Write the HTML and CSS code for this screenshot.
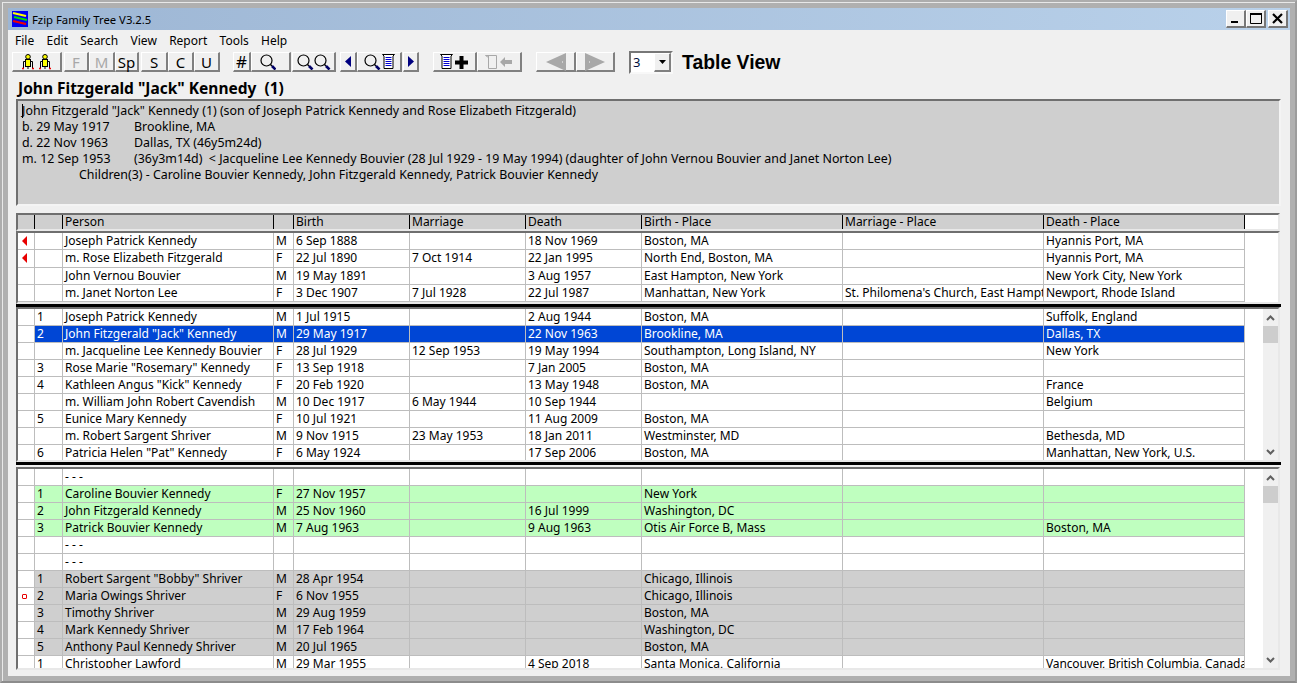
FILE: index.html
```html
<!DOCTYPE html>
<html lang="en">
<head>
    <meta charset="UTF-8">
    <title>Fzip Family Tree V3.2.5</title>
    <link rel="stylesheet" href="styles.css">
</head>
<body>
<svg class="defs" width="0" height="0">
    <defs>
        <g id="person">
            <path d="M1.500 14V7.500h9V14" fill="none" stroke="#000"/>
            <rect x="3.500" y="5.500" width="5" height="7" fill="#ff0" stroke="#000"/>
            <circle cx="6" cy="2.800" r="2.300" fill="#ff0" stroke="#000"/>
            <path d="M0 14.500h2M10 14.500h2" stroke="#e00" stroke-width="1.500"/>
            <path d="M6 12.500V15" stroke="#000"/>
        </g>
        <g id="lens">
            <circle cx="6.500" cy="6.500" r="5.500" fill="none" stroke="#000" stroke-width="1.200"/>
            <path d="M10.500 10.500l1.500 1.500" stroke="#000" stroke-width="1.400"/>
            <path d="M12 12l3.500 3.500" stroke="#006" stroke-width="2.600"/>
        </g>
        <g id="doc">
            <path d="M.5.500h12l-1.500 1.500v12.500h-9V2z" fill="#fff" stroke="#000"/>
            <path d="M3.500 3.500h6M3.500 5.500h6M3.500 7.500h6M3.500 9.500h6M3.500 11.500h6" stroke="#0000d0"/>
        </g>
    </defs>
</svg>
<div class="window">
<div class="frame">
<div class="client">

    <div class="titlebar">
        <svg class="app-icon" width="16" height="16" viewBox="0 0 16 16">
            <rect width="16" height="16" fill="#0000f0"/>
            <path d="M1 2l13 3" stroke="#ffff00" stroke-width="2"/>
            <path d="M2 6l13 3" stroke="#00e000" stroke-width="2"/>
            <path d="M1 10l13 3" stroke="#f00000" stroke-width="2"/>
        </svg>
        <span class="title-text">Fzip Family Tree V3.2.5</span>
        <div class="win-buttons">
            <button class="win-btn">
                <svg width="9" height="9" viewBox="0 0 9 9"><path d="M0 8h7" stroke="#000" stroke-width="2"/></svg>
            </button>
            <button class="win-btn">
                <svg width="12" height="11" viewBox="0 0 12 11"><path d="M.5 1.500h11v9H.5z" fill="none" stroke="#000"/><path d="M0 1h12" stroke="#000" stroke-width="2"/></svg>
            </button>
            <button class="win-btn win-close">
                <svg width="11" height="11" viewBox="0 0 11 11"><path d="M1 1l9 9M10 1l-9 9" stroke="#000" stroke-width="2.200"/></svg>
            </button>
        </div>
    </div>

    <div class="menubar">
        <span>File</span>
        <span>Edit</span>
        <span>Search</span>
        <span>View</span>
        <span>Report</span>
        <span>Tools</span>
        <span>Help</span>
    </div>

    <div class="toolbar">
        <button class="tb w50 gap2">
            <svg width="29" height="16" viewBox="0 0 29 16"><use href="#person"/><use href="#person" x="17"/></svg>
        </button>
        <button class="tb w25 off">F</button>
        <button class="tb w26 off">M</button>
        <button class="tb w24 gap2">Sp</button>
        <button class="tb w27">S</button>
        <button class="tb w26">C</button>
        <button class="tb w26 gap13">U</button>
        <button class="tb w18 hash">#</button>
        <button class="tb w40 gap1">
            <svg class="shift-q" width="16" height="16" viewBox="0 0 16 16"><use href="#lens"/></svg>
        </button>
        <button class="tb w44 gap4">
            <svg width="34" height="16" viewBox="0 0 34 16"><use href="#lens"/><use href="#lens" x="17"/></svg>
        </button>
        <button class="tb w17">
            <svg width="6" height="11" viewBox="0 0 6 11"><path d="M6 0v11L0 5.500z" fill="#000080"/></svg>
        </button>
        <button class="tb w45 gap1">
            <svg width="31" height="16" viewBox="0 0 31 16"><use href="#lens"/><use href="#doc" x="18"/></svg>
        </button>
        <button class="tb w16 gap14">
            <svg width="6" height="11" viewBox="0 0 6 11"><path d="M0 0v11l6-5.500z" fill="#000080"/></svg>
        </button>
        <button class="tb w44">
            <svg width="30" height="16" viewBox="0 0 30 16"><use href="#doc"/><path d="M21.500 2v13M15 8.500h13" stroke="#000" stroke-width="4"/></svg>
        </button>
        <button class="tb w45 gap14">
            <svg width="30" height="16" viewBox="0 0 30 16"><path d="M1.500 1.500h11v13h-8v-11z" fill="none" stroke="#a8a8a8"/><path d="M4.500 2v12" stroke="#a8a8a8"/><path d="M16 8l5-5v3h7v4h-7v3z" fill="#a8a8a8"/></svg>
        </button>
        <button class="tb w40">
            <svg width="20" height="18" viewBox="0 0 20 18"><path d="M20 0v18L0 9z" fill="#a8a8a8"/><path d="M16 8h1v2h-1z" fill="#d0d0d0"/></svg>
        </button>
        <button class="tb w39 gap14">
            <svg width="20" height="18" viewBox="0 0 20 18"><path d="M0 0v18l20-9z" fill="#a8a8a8"/><path d="M4 8h1v2H4z" fill="#d0d0d0"/></svg>
        </button>
        <div class="combo">
            <span class="combo-value">3</span>
            <span class="combo-drop">
                <svg width="7" height="4" viewBox="0 0 7 4"><path d="M0 0h7L3.500 4z" fill="#000"/></svg>
            </span>
        </div>
        <span class="view-label">Table View</span>
    </div>

    <div class="main">
        <h1 class="person-name">John Fitzgerald "Jack" Kennedy &nbsp;(1)</h1>

        <div class="info">
            <div><span class="caret"></span>John Fitzgerald "Jack" Kennedy (1) (son of Joseph Patrick Kennedy and Rose Elizabeth Fitzgerald)</div>
            <div><span class="tab">b. 29 May 1917</span>Brookline, MA</div>
            <div><span class="tab">d. 22 Nov 1963</span>Dallas, TX (46y5m24d)</div>
            <div><span class="tab">m. 12 Sep 1953</span>(36y3m14d) &nbsp;&lt; Jacqueline Lee Kennedy Bouvier (28 Jul 1929 - 19 May 1994) (daughter of John Vernou Bouvier and Janet Norton Lee)</div>
            <div class="children">Children(3) - Caroline Bouvier Kennedy, John Fitzgerald Kennedy, Patrick Bouvier Kennedy</div>
        </div>

        <div class="grid grid-head">
            <table>
                <colgroup><col class="c1"><col class="c2"><col class="c3"><col class="c4"><col class="c5"><col class="c5"><col class="c5"><col class="c6"><col class="c6"><col class="c6"></colgroup>
                <tr><th></th><th></th><th>Person</th><th></th><th>Birth</th><th>Marriage</th><th>Death</th><th>Birth - Place</th><th>Marriage - Place</th><th>Death - Place</th></tr>
            </table>
        </div>

        <div class="grid grid-parents">
            <table>
                <colgroup><col class="c1"><col class="c2"><col class="c3"><col class="c4"><col class="c5"><col class="c5"><col class="c5"><col class="c6"><col class="c6"><col class="c6"></colgroup>
                <tr><td><i class="mark-left"></i></td><td></td><td>Joseph Patrick Kennedy</td><td>M</td><td>6 Sep 1888</td><td></td><td>18 Nov 1969</td><td>Boston, MA</td><td></td><td>Hyannis Port, MA</td></tr>
                <tr><td><i class="mark-left"></i></td><td></td><td>m. Rose Elizabeth Fitzgerald</td><td>F</td><td>22 Jul 1890</td><td>7 Oct 1914</td><td>22 Jan 1995</td><td>North End, Boston, MA</td><td></td><td>Hyannis Port, MA</td></tr>
                <tr><td></td><td></td><td>John Vernou Bouvier</td><td>M</td><td>19 May 1891</td><td></td><td>3 Aug 1957</td><td>East Hampton, New York</td><td></td><td>New York City, New York</td></tr>
                <tr><td></td><td></td><td>m. Janet Norton Lee</td><td>F</td><td>3 Dec 1907</td><td>7 Jul 1928</td><td>22 Jul 1987</td><td>Manhattan, New York</td><td>St. Philomena's Church, East Hampton, New York</td><td>Newport, Rhode Island</td></tr>
            </table>
        </div>

        <div class="rule"></div>

        <div class="grid grid-siblings">
            <div class="rows">
            <table>
                <colgroup><col class="c1"><col class="c2"><col class="c3"><col class="c4"><col class="c5"><col class="c5"><col class="c5"><col class="c6"><col class="c6"><col class="c6"></colgroup>
                <tr><td></td><td>1</td><td>Joseph Patrick Kennedy</td><td>M</td><td>1 Jul 1915</td><td></td><td>2 Aug 1944</td><td>Boston, MA</td><td></td><td>Suffolk, England</td></tr>
                <tr class="selected"><td></td><td>2</td><td>John Fitzgerald "Jack" Kennedy</td><td>M</td><td>29 May 1917</td><td></td><td>22 Nov 1963</td><td>Brookline, MA</td><td></td><td>Dallas, TX</td></tr>
                <tr><td></td><td></td><td>m. Jacqueline Lee Kennedy Bouvier</td><td>F</td><td>28 Jul 1929</td><td>12 Sep 1953</td><td>19 May 1994</td><td>Southampton, Long Island, NY</td><td></td><td>New York</td></tr>
                <tr><td></td><td>3</td><td>Rose Marie "Rosemary" Kennedy</td><td>F</td><td>13 Sep 1918</td><td></td><td>7 Jan 2005</td><td>Boston, MA</td><td></td><td></td></tr>
                <tr><td></td><td>4</td><td>Kathleen Angus "Kick" Kennedy</td><td>F</td><td>20 Feb 1920</td><td></td><td>13 May 1948</td><td>Boston, MA</td><td></td><td>France</td></tr>
                <tr><td></td><td></td><td>m. William John Robert Cavendish</td><td>M</td><td>10 Dec 1917</td><td>6 May 1944</td><td>10 Sep 1944</td><td></td><td></td><td>Belgium</td></tr>
                <tr><td></td><td>5</td><td>Eunice Mary Kennedy</td><td>F</td><td>10 Jul 1921</td><td></td><td>11 Aug 2009</td><td>Boston, MA</td><td></td><td></td></tr>
                <tr><td></td><td></td><td>m. Robert Sargent Shriver</td><td>M</td><td>9 Nov 1915</td><td>23 May 1953</td><td>18 Jan 2011</td><td>Westminster, MD</td><td></td><td>Bethesda, MD</td></tr>
                <tr><td></td><td>6</td><td>Patricia Helen "Pat" Kennedy</td><td>F</td><td>6 May 1924</td><td></td><td>17 Sep 2006</td><td>Boston, MA</td><td></td><td>Manhattan, New York, U.S.</td></tr>
            </table>
            </div>
            <div class="scrollbar">
                <span class="sb-arrow"><svg width="9" height="6" viewBox="0 0 9 6"><path d="M1 5l3.500-3.500L8 5" fill="none" stroke="#606060" stroke-width="2"/></svg></span>
                <span class="sb-thumb"></span>
                <span class="sb-space"></span>
                <span class="sb-arrow"><svg width="9" height="6" viewBox="0 0 9 6"><path d="M1 1l3.500 3.500L8 1" fill="none" stroke="#606060" stroke-width="2"/></svg></span>
            </div>
        </div>

        <div class="rule rule-low"></div>

        <div class="grid grid-children">
            <div class="rows">
            <table>
                <colgroup><col class="c1"><col class="c2"><col class="c3"><col class="c4"><col class="c5"><col class="c5"><col class="c5"><col class="c6"><col class="c6"><col class="c6"></colgroup>
                <tr><td></td><td></td><td>- - -</td><td></td><td></td><td></td><td></td><td></td><td></td><td></td></tr>
                <tr class="green"><td></td><td>1</td><td>Caroline Bouvier Kennedy</td><td>F</td><td>27 Nov 1957</td><td></td><td></td><td>New York</td><td></td><td></td></tr>
                <tr class="green"><td></td><td>2</td><td>John Fitzgerald Kennedy</td><td>M</td><td>25 Nov 1960</td><td></td><td>16 Jul 1999</td><td>Washington, DC</td><td></td><td></td></tr>
                <tr class="green"><td></td><td>3</td><td>Patrick Bouvier Kennedy</td><td>M</td><td>7 Aug 1963</td><td></td><td>9 Aug 1963</td><td>Otis Air Force B, Mass</td><td></td><td>Boston, MA</td></tr>
                <tr><td></td><td></td><td>- - -</td><td></td><td></td><td></td><td></td><td></td><td></td><td></td></tr>
                <tr><td></td><td></td><td>- - -</td><td></td><td></td><td></td><td></td><td></td><td></td><td></td></tr>
                <tr class="grey"><td></td><td>1</td><td>Robert Sargent "Bobby" Shriver</td><td>M</td><td>28 Apr 1954</td><td></td><td></td><td>Chicago, Illinois</td><td></td><td></td></tr>
                <tr class="grey"><td><i class="mark-ring"></i></td><td>2</td><td>Maria Owings Shriver</td><td>F</td><td>6 Nov 1955</td><td></td><td></td><td>Chicago, Illinois</td><td></td><td></td></tr>
                <tr class="grey"><td></td><td>3</td><td>Timothy Shriver</td><td>M</td><td>29 Aug 1959</td><td></td><td></td><td>Boston, MA</td><td></td><td></td></tr>
                <tr class="grey"><td></td><td>4</td><td>Mark Kennedy Shriver</td><td>M</td><td>17 Feb 1964</td><td></td><td></td><td>Washington, DC</td><td></td><td></td></tr>
                <tr class="grey"><td></td><td>5</td><td>Anthony Paul Kennedy Shriver</td><td>M</td><td>20 Jul 1965</td><td></td><td></td><td>Boston, MA</td><td></td><td></td></tr>
                <tr><td></td><td>1</td><td>Christopher Lawford</td><td>M</td><td>29 Mar 1955</td><td></td><td>4 Sep 2018</td><td>Santa Monica, California</td><td></td><td class="tight">Vancouver, British Columbia, Canada</td></tr>
            </table>
            </div>
            <div class="scrollbar">
                <span class="sb-arrow"><svg width="9" height="6" viewBox="0 0 9 6"><path d="M1 5l3.500-3.500L8 5" fill="none" stroke="#606060" stroke-width="2"/></svg></span>
                <span class="sb-thumb"></span>
                <span class="sb-space"></span>
                <span class="sb-arrow"><svg width="9" height="6" viewBox="0 0 9 6"><path d="M1 1l3.500 3.500L8 1" fill="none" stroke="#606060" stroke-width="2"/></svg></span>
            </div>
        </div>
    </div>

</div>
</div>
</div>
</body>
</html>
```

FILE: styles.css
```css
html, body { margin: 0; padding: 0; height: 100%; overflow: hidden; }
body { font-family: "Noto Sans", sans-serif; font-size: 12px; color: #000; }
.defs { position: absolute; }

/* window chrome */
.window { box-sizing: border-box; width: 1297px; height: 683px; border: 2px solid #adadad; border-bottom-color: #8c8c8c; border-right-color: #9c9c9c; }
.frame { box-sizing: border-box; height: 100%; background: #b0b0b0; border-top: 1px solid #e8e8e8; border-left: 1px solid #e8e8e8; padding: 5px; }
.client { box-sizing: border-box; width: 1282px; height: 668px; background: #f0f0f0; }

.titlebar { display: flex; align-items: center; height: 22px; padding-left: 4px; background: linear-gradient(to right, #9db6d4, #b9d1ea); }
.app-icon { margin-right: 4px; }
.title-text { font-size: 11.300px; }
.win-buttons { display: flex; margin-left: auto; margin-right: 2px; }
.win-btn { box-sizing: border-box; display: flex; align-items: center; justify-content: center; width: 20px; height: 18px; padding: 0; background: #f0f0f0; border: 1px solid #fff; border-right: 2px solid #777; border-bottom: 2px solid #777; }
.win-close { margin-left: 2px; }

.menubar { display: flex; height: 20px; align-items: center; padding-left: 7px; gap: 12.300px; }

/* toolbar */
.toolbar { display: flex; align-items: center; height: 20px; margin-top: 2px; padding-left: 4px; }
.tb { box-sizing: border-box; display: flex; align-items: center; justify-content: center; height: 20px; padding: 0; background: #f0f0f0; border: 1px solid #fff; border-right: 2px solid #808080; border-bottom: 2px solid #808080; font-family: "Noto Sans", sans-serif; font-size: 15px; color: #000; }
.tb.off { color: #a8a8a8; }
.tb.hash { font-size: 17px; }
.w16 { width: 16px; } .w17 { width: 17px; } .w18 { width: 18px; } .w24 { width: 24px; } .w25 { width: 25px; }
.w26 { width: 26px; } .w27 { width: 27px; } .w39 { width: 39px; } .w40 { width: 40px; } .w44 { width: 44px; }
.w45 { width: 45px; } .w50 { width: 50px; }
.gap1 { margin-right: 1px; } .gap2 { margin-right: 2px; } .gap4 { margin-right: 4px; } .gap13 { margin-right: 13px; } .gap14 { margin-right: 14px; }
.shift-q { margin-right: 6px; }

.combo { box-sizing: border-box; display: flex; width: 44px; height: 23px; background: #fff; border: 2px solid #777; border-right-color: #f8f8f8; border-bottom-color: #f8f8f8; }
.combo-value { flex: 1; padding-left: 2px; line-height: 19px; font-size: 13px; color: #001040; }
.combo-drop { box-sizing: border-box; display: flex; align-items: center; justify-content: center; width: 17px; background: #f0f0f0; border: 1px solid #fff; border-right: 2px solid #808080; border-bottom: 2px solid #808080; }
.view-label { margin-left: 9px; font-family: "Liberation Sans", sans-serif; font-size: 19.400px; font-weight: bold; }

/* main area */
.main { padding: 0 9px 0 8px; }
.person-name { margin: 6px 0 1px; padding-left: 2px; height: 20px; line-height: 20px; font-size: 15.500px; font-weight: bold; white-space: pre; }

.info { box-sizing: border-box; height: 107px; margin-bottom: 7px; padding: 2px 4px; background: #cfcfcf; border: 2px solid #6f6f6f; border-right-color: #f4f4f4; border-bottom-color: #f4f4f4; font-size: 12.400px; line-height: 16px; }
.tab { display: inline-block; width: 112px; }
.children { padding-left: 57px; }
.caret { display: inline-block; width: 0; height: 14px; margin-right: -1px; border-left: 1px solid #000; vertical-align: -3px; }

/* grids */
.grid { display: flex; width: 1260px; background: #fff; border: 2px solid #6f6f6f; border-right-color: #e8e8e8; border-bottom-color: #e8e8e8; overflow: hidden; }
table { table-layout: fixed; width: 1227px; border-collapse: separate; border-spacing: 0; flex: none; }
.c1 { width: 17px; } .c2 { width: 28px; } .c3 { width: 211px; } .c4 { width: 20px; } .c5 { width: 116px; } .c6 { width: 201px; }
th, td { box-sizing: border-box; height: 17px; padding: 0 0 0 2px; white-space: nowrap; font-weight: normal; text-align: left; line-height: 16px; }
td { overflow: hidden; border-right: 1px solid #bdbdbd; border-bottom: 1px solid #bdbdbd; }
td.tight { letter-spacing: -0.150px; }
th { height: 14px; line-height: 14px; background: #cfcfcf; border-right: 1px solid #000; }

.grid-head { height: 14px; }
.grid-parents { height: 69px; }
.grid-siblings { height: 151px; }
.grid-children { height: 199px; }
.rows { flex: none; width: 1227px; overflow: hidden; }

.selected td { background: #0046d5; color: #fff; }
.green td { background: #bfffbf; }
.grey td { background: #cfcfcf; }
.selected td:first-child, .green td:first-child, .grey td:first-child { background: #fff; }

.rule { height: 3px; background: #000; width: 1265px; }
.rule-low { margin-bottom: 2px; }

.mark-left { display: block; width: 0; height: 0; margin-left: 2px; border-style: solid; border-width: 5px 5px 5px 0; border-color: transparent #e80000 transparent transparent; }
.mark-ring { display: block; box-sizing: border-box; width: 5px; height: 5px; margin-left: 2px; border: 1px solid #e80000; border-radius: 1px; background: #fff; }

.scrollbar { display: flex; flex-direction: column; width: 15px; margin-left: 18px; background: #f0f0f0; }
.sb-arrow { display: flex; flex: none; align-items: center; justify-content: center; height: 17px; }
.sb-thumb { flex: none; height: 17px; background: #cdcdcd; }
.sb-space { flex: 1; }
```
